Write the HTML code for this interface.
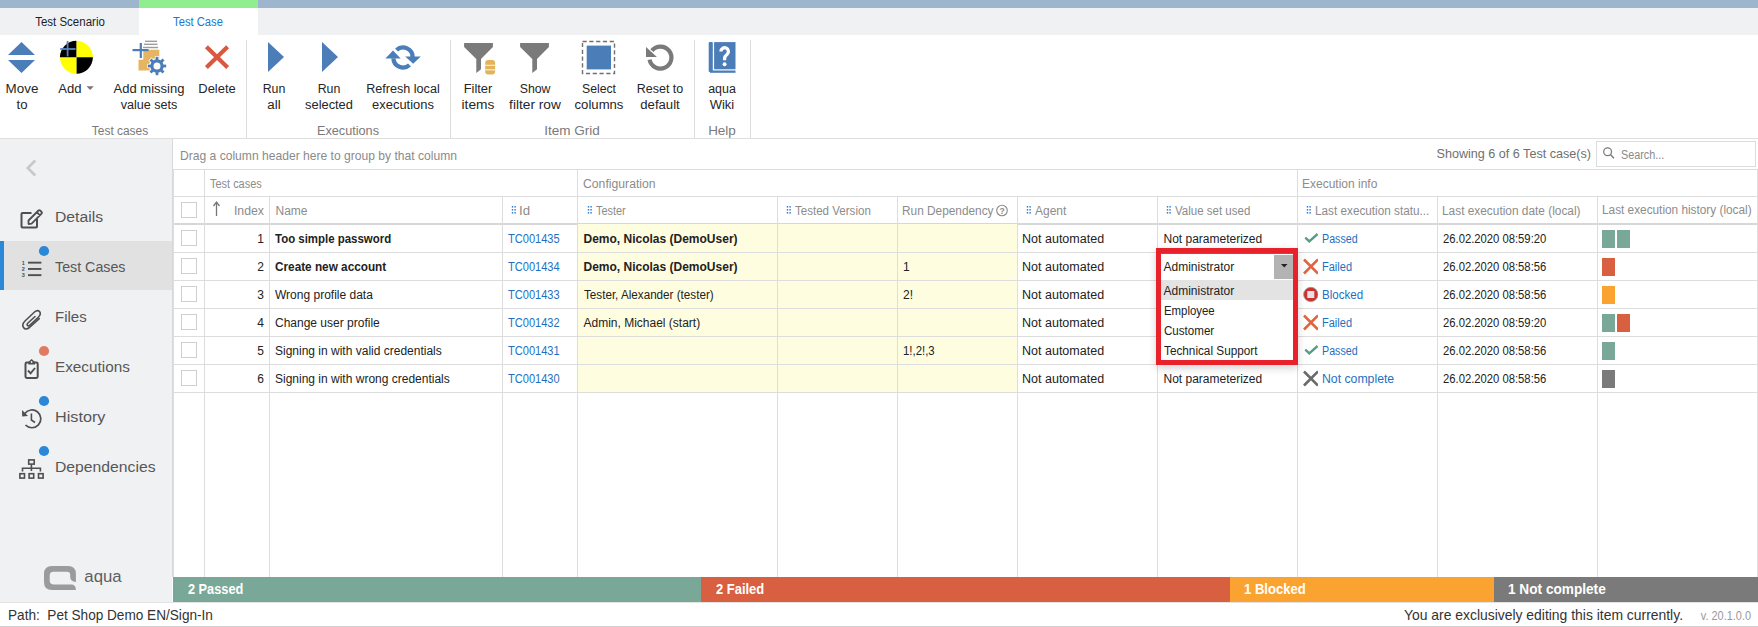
<!DOCTYPE html>
<html><head><meta charset="utf-8"><style>
html,body{margin:0;padding:0;width:1758px;height:627px;overflow:hidden;background:#fff;position:relative;font-family:"Liberation Sans", sans-serif;}
svg text{font-family:"Liberation Sans", sans-serif;}
</style></head><body>
<div style="position:absolute;left:0px;top:0px;width:1758px;height:8px;background:#9db6cd;"></div>
<div style="position:absolute;left:0px;top:8px;width:1758px;height:27px;background:#f0f1f3;"></div>
<div style="position:absolute;left:139px;top:0px;width:119px;height:8px;background:#90ee90;"></div>
<div style="position:absolute;left:139px;top:8px;width:119px;height:27px;background:#ffffff;"></div>
<div style="position:absolute;left:-130.5px;width:400px;text-align:center;top:16.42px;font-size:12.5px;line-height:12.5px;color:#1e1e1e;font-weight:400;white-space:pre;transform:scaleX(0.92);transform-origin:center top;">Test Scenario</div>
<div style="position:absolute;left:-1.6999999999999886px;width:400px;text-align:center;top:16.42px;font-size:12.5px;line-height:12.5px;color:#1a78d0;font-weight:400;white-space:pre;transform:scaleX(0.895);transform-origin:center top;">Test Case</div>
<div style="position:absolute;left:0px;top:35px;width:1758px;height:103px;background:#ffffff;"></div>
<div style="position:absolute;left:0px;top:138px;width:1758px;height:1px;background:#dedede;"></div>
<div style="position:absolute;left:246px;top:40px;width:1px;height:98px;background:#dcdcdc;"></div>
<div style="position:absolute;left:450px;top:40px;width:1px;height:98px;background:#dcdcdc;"></div>
<div style="position:absolute;left:694px;top:40px;width:1px;height:98px;background:#dcdcdc;"></div>
<div style="position:absolute;left:750px;top:40px;width:1px;height:98px;background:#dcdcdc;"></div>
<div style="position:absolute;left:-178.5px;width:400px;text-align:center;top:82.59px;font-size:12.3px;line-height:12.3px;color:#262626;font-weight:400;white-space:pre;transform:scaleX(1.09);transform-origin:center top;">Move</div>
<div style="position:absolute;left:-178.5px;width:400px;text-align:center;top:98.59px;font-size:12.3px;line-height:12.3px;color:#262626;font-weight:400;white-space:pre;transform:scaleX(1.07);transform-origin:center top;">to</div>
<div style="position:absolute;left:-130.3px;width:400px;text-align:center;top:82.59px;font-size:12.3px;line-height:12.3px;color:#262626;font-weight:400;white-space:pre;transform:scaleX(1.064);transform-origin:center top;">Add</div>
<div style="position:absolute;left:-50.69999999999999px;width:400px;text-align:center;top:82.59px;font-size:12.3px;line-height:12.3px;color:#262626;font-weight:400;white-space:pre;transform:scaleX(1.057);transform-origin:center top;">Add missing</div>
<div style="position:absolute;left:-50.69999999999999px;width:400px;text-align:center;top:98.59px;font-size:12.3px;line-height:12.3px;color:#262626;font-weight:400;white-space:pre;transform:scaleX(1.024);transform-origin:center top;">value sets</div>
<div style="position:absolute;left:16.900000000000006px;width:400px;text-align:center;top:82.59px;font-size:12.3px;line-height:12.3px;color:#262626;font-weight:400;white-space:pre;transform:scaleX(1.051);transform-origin:center top;">Delete</div>
<div style="position:absolute;left:74.39999999999998px;width:400px;text-align:center;top:82.59px;font-size:12.3px;line-height:12.3px;color:#262626;font-weight:400;white-space:pre;transform:scaleX(1.005);transform-origin:center top;">Run</div>
<div style="position:absolute;left:74.39999999999998px;width:400px;text-align:center;top:98.59px;font-size:12.3px;line-height:12.3px;color:#262626;font-weight:400;white-space:pre;transform:scaleX(1.083);transform-origin:center top;">all</div>
<div style="position:absolute;left:128.89999999999998px;width:400px;text-align:center;top:82.59px;font-size:12.3px;line-height:12.3px;color:#262626;font-weight:400;white-space:pre;transform:scaleX(1.005);transform-origin:center top;">Run</div>
<div style="position:absolute;left:128.89999999999998px;width:400px;text-align:center;top:98.59px;font-size:12.3px;line-height:12.3px;color:#262626;font-weight:400;white-space:pre;transform:scaleX(1.044);transform-origin:center top;">selected</div>
<div style="position:absolute;left:203.0px;width:400px;text-align:center;top:82.59px;font-size:12.3px;line-height:12.3px;color:#262626;font-weight:400;white-space:pre;transform:scaleX(1.023);transform-origin:center top;">Refresh local</div>
<div style="position:absolute;left:203.0px;width:400px;text-align:center;top:98.59px;font-size:12.3px;line-height:12.3px;color:#262626;font-weight:400;white-space:pre;transform:scaleX(1.052);transform-origin:center top;">executions</div>
<div style="position:absolute;left:278.3px;width:400px;text-align:center;top:82.59px;font-size:12.3px;line-height:12.3px;color:#262626;font-weight:400;white-space:pre;transform:scaleX(1.048);transform-origin:center top;">Filter</div>
<div style="position:absolute;left:278.3px;width:400px;text-align:center;top:98.59px;font-size:12.3px;line-height:12.3px;color:#262626;font-weight:400;white-space:pre;transform:scaleX(1.118);transform-origin:center top;">items</div>
<div style="position:absolute;left:335.1px;width:400px;text-align:center;top:82.59px;font-size:12.3px;line-height:12.3px;color:#262626;font-weight:400;white-space:pre;transform:scaleX(1.0);transform-origin:center top;">Show</div>
<div style="position:absolute;left:335.1px;width:400px;text-align:center;top:98.59px;font-size:12.3px;line-height:12.3px;color:#262626;font-weight:400;white-space:pre;transform:scaleX(1.115);transform-origin:center top;">filter row</div>
<div style="position:absolute;left:398.79999999999995px;width:400px;text-align:center;top:82.59px;font-size:12.3px;line-height:12.3px;color:#262626;font-weight:400;white-space:pre;transform:scaleX(0.994);transform-origin:center top;">Select</div>
<div style="position:absolute;left:398.79999999999995px;width:400px;text-align:center;top:98.59px;font-size:12.3px;line-height:12.3px;color:#262626;font-weight:400;white-space:pre;transform:scaleX(1.067);transform-origin:center top;">columns</div>
<div style="position:absolute;left:460.0px;width:400px;text-align:center;top:82.59px;font-size:12.3px;line-height:12.3px;color:#262626;font-weight:400;white-space:pre;transform:scaleX(1.018);transform-origin:center top;">Reset to</div>
<div style="position:absolute;left:460.0px;width:400px;text-align:center;top:98.59px;font-size:12.3px;line-height:12.3px;color:#262626;font-weight:400;white-space:pre;transform:scaleX(1.068);transform-origin:center top;">default</div>
<div style="position:absolute;left:522.0px;width:400px;text-align:center;top:82.59px;font-size:12.3px;line-height:12.3px;color:#262626;font-weight:400;white-space:pre;transform:scaleX(1.011);transform-origin:center top;">aqua</div>
<div style="position:absolute;left:522.0px;width:400px;text-align:center;top:98.59px;font-size:12.3px;line-height:12.3px;color:#262626;font-weight:400;white-space:pre;transform:scaleX(1.057);transform-origin:center top;">Wiki</div>
<div style="position:absolute;left:-80.0px;width:400px;text-align:center;top:124.59px;font-size:12.3px;line-height:12.3px;color:#7a7a7a;font-weight:400;white-space:pre;transform:scaleX(0.971);transform-origin:center top;">Test cases</div>
<div style="position:absolute;left:148.3px;width:400px;text-align:center;top:124.59px;font-size:12.3px;line-height:12.3px;color:#7a7a7a;font-weight:400;white-space:pre;transform:scaleX(1.031);transform-origin:center top;">Executions</div>
<div style="position:absolute;left:372.0px;width:400px;text-align:center;top:124.59px;font-size:12.3px;line-height:12.3px;color:#7a7a7a;font-weight:400;white-space:pre;transform:scaleX(1.1);transform-origin:center top;">Item Grid</div>
<div style="position:absolute;left:522.2px;width:400px;text-align:center;top:124.59px;font-size:12.3px;line-height:12.3px;color:#7a7a7a;font-weight:400;white-space:pre;transform:scaleX(1.096);transform-origin:center top;">Help</div>
<svg style="position:absolute;left:0px;top:35px" width="760" height="100" viewBox="0 35 760 100"><polygon points="8,55 21.5,42 35,55" fill="#4b7db8"/><polygon points="8,60 35,60 21.5,73" fill="#4b7db8"/><path d="M76.4,57.3 L76.4,40.8 A16.5,16.5 0 0 1 92.9,57.3 Z" fill="#ffff00"/><path d="M76.4,57.3 L92.9,57.3 A16.5,16.5 0 0 1 76.4,73.8 Z" fill="#000"/><path d="M76.4,57.3 L76.4,73.8 A16.5,16.5 0 0 1 59.900000000000006,57.3 Z" fill="#ffff00"/><path d="M76.4,57.3 L59.900000000000006,57.3 A16.5,16.5 0 0 1 76.4,40.8 Z" fill="#000"/><rect x="60.2" y="48.1" width="15.4" height="1.8" fill="#5585c0"/><rect x="66.7" y="41" width="1.8" height="15.4" fill="#5585c0"/><polygon points="86.5,86.2 93.8,86.2 90.15,90" fill="#777"/><rect x="145" y="40.6" width="12" height="1.4" fill="#9d9d9d"/><rect x="144" y="43.6" width="13.5" height="1.4" fill="#9d9d9d"/><rect x="143" y="46.8" width="15" height="1.4" fill="#9d9d9d"/><polygon points="143.3,49.8 159.3,49.8 159.3,70.5 138.5,70.5 138.5,59.7 143.3,59.7" fill="#e5b562"/><rect x="132.5" y="49" width="16" height="2.2" fill="#4b7db8"/><rect x="139.7" y="43" width="2.2" height="15" fill="#4b7db8"/><rect x="155.6" y="56.8" width="2.8" height="4" fill="#fff" stroke="#fff" stroke-width="1.4" transform="rotate(0 157 66)"/><rect x="155.6" y="56.8" width="2.8" height="4" fill="#fff" stroke="#fff" stroke-width="1.4" transform="rotate(45 157 66)"/><rect x="155.6" y="56.8" width="2.8" height="4" fill="#fff" stroke="#fff" stroke-width="1.4" transform="rotate(90 157 66)"/><rect x="155.6" y="56.8" width="2.8" height="4" fill="#fff" stroke="#fff" stroke-width="1.4" transform="rotate(135 157 66)"/><rect x="155.6" y="56.8" width="2.8" height="4" fill="#fff" stroke="#fff" stroke-width="1.4" transform="rotate(180 157 66)"/><rect x="155.6" y="56.8" width="2.8" height="4" fill="#fff" stroke="#fff" stroke-width="1.4" transform="rotate(225 157 66)"/><rect x="155.6" y="56.8" width="2.8" height="4" fill="#fff" stroke="#fff" stroke-width="1.4" transform="rotate(270 157 66)"/><rect x="155.6" y="56.8" width="2.8" height="4" fill="#fff" stroke="#fff" stroke-width="1.4" transform="rotate(315 157 66)"/><circle cx="157" cy="66" r="5.2" fill="none" stroke="#fff" stroke-width="5.6"/><rect x="155.6" y="56.8" width="2.8" height="4" fill="#4b7db8" transform="rotate(0 157 66)"/><rect x="155.6" y="56.8" width="2.8" height="4" fill="#4b7db8" transform="rotate(45 157 66)"/><rect x="155.6" y="56.8" width="2.8" height="4" fill="#4b7db8" transform="rotate(90 157 66)"/><rect x="155.6" y="56.8" width="2.8" height="4" fill="#4b7db8" transform="rotate(135 157 66)"/><rect x="155.6" y="56.8" width="2.8" height="4" fill="#4b7db8" transform="rotate(180 157 66)"/><rect x="155.6" y="56.8" width="2.8" height="4" fill="#4b7db8" transform="rotate(225 157 66)"/><rect x="155.6" y="56.8" width="2.8" height="4" fill="#4b7db8" transform="rotate(270 157 66)"/><rect x="155.6" y="56.8" width="2.8" height="4" fill="#4b7db8" transform="rotate(315 157 66)"/><circle cx="157" cy="66" r="5.1" fill="#fff" stroke="#4b7db8" stroke-width="3.2"/><path d="M206.4,46.8 L227.6,67.4 M227.6,46.8 L206.4,67.4" stroke="#d9583f" stroke-width="4.2" stroke-linecap="butt"/><polygon points="268,42 268,72 284,57" fill="#4b7db8"/><polygon points="322,42 322,72 338,57" fill="#4b7db8"/><path d="M396.5,50 A9.6,9.6 0 0 1 412.6,57.5" fill="none" stroke="#4b7db8" stroke-width="4.3"/><path d="M393.4,58.4 A9.6,9.6 0 0 0 409.5,65" fill="none" stroke="#4b7db8" stroke-width="4.3"/><polygon points="393,50.4 385.4,58.4 400.7,58.4" fill="#4b7db8"/><polygon points="405.2,56.5 420.8,56.5 413.2,63.8" fill="#4b7db8"/><polygon points="464.1,43.1 492.9,43.1 492.9,46.9 481,59 481,69.3 476.3,73.1 476.3,59 464.1,46.9" fill="#7a7a7a"/><rect x="485.2" y="60" width="9.9" height="14.4" rx="3" fill="#e2b35a"/><rect x="485.2" y="64.8" width="9.9" height="0.9" fill="#fff"/><rect x="485.2" y="69.4" width="9.9" height="0.9" fill="#fff"/><polygon points="520.1,43.1 548.9,43.1 548.9,46.9 537,59 537,69.3 532.3,73.1 532.3,59 520.1,46.9" fill="#7a7a7a"/><rect x="582.5" y="41.5" width="32" height="32" fill="none" stroke="#707070" stroke-width="1.4" stroke-dasharray="4.2,2.6"/><rect x="586.7" y="45.6" width="24.3" height="23.8" fill="#4b7db8"/><path d="M649.6,59.6 A11,11 0 1 0 651.9,50.6" fill="none" stroke="#7a7a7a" stroke-width="4.2"/><polygon points="646,46.9 646,57.1 656.9,57.1" fill="#7a7a7a"/><rect x="708.7" y="42.1" width="4.1" height="30" rx="1" fill="#4b7db8"/><rect x="714.1" y="42.1" width="21.4" height="27.2" fill="#4b7db8"/><rect x="710" y="70.5" width="25.5" height="2.3" fill="#4b7db8"/><path d="M720.9,51.6 A3.75,3.75 0 1 1 727.2,54.3 Q724.6,56.3 724.6,58.5 L724.6,60.2" fill="none" stroke="#fff" stroke-width="3.3"/><circle cx="724.6" cy="64.2" r="1.95" fill="#fff"/></svg>
<div style="position:absolute;left:0px;top:139px;width:172px;height:463px;background:#f0f1f3;"></div>
<div style="position:absolute;left:172px;top:139px;width:1px;height:438px;background:#d9d9d9;"></div>
<div style="position:absolute;left:0px;top:241px;width:172px;height:49px;background:#e1e1e1;"></div>
<div style="position:absolute;left:0px;top:241px;width:4px;height:49px;background:#2b87d8;"></div>
<div style="position:absolute;left:54.5px;top:208.88px;font-size:15.5px;line-height:15.5px;color:#575757;font-weight:400;white-space:pre;transform:scaleX(1.0132258064516129);transform-origin:left top;">Details</div>
<div style="position:absolute;left:54.5px;top:258.88px;font-size:15.5px;line-height:15.5px;color:#575757;font-weight:400;white-space:pre;transform:scaleX(0.9193548387096774);transform-origin:left top;">Test Cases</div>
<div style="position:absolute;left:54.5px;top:308.88px;font-size:15.5px;line-height:15.5px;color:#575757;font-weight:400;white-space:pre;transform:scaleX(0.967741935483871);transform-origin:left top;">Files</div>
<div style="position:absolute;left:54.5px;top:358.88px;font-size:15.5px;line-height:15.5px;color:#575757;font-weight:400;white-space:pre;transform:scaleX(0.9870967741935485);transform-origin:left top;">Executions</div>
<div style="position:absolute;left:54.5px;top:408.88px;font-size:15.5px;line-height:15.5px;color:#575757;font-weight:400;white-space:pre;transform:scaleX(1.0451612903225809);transform-origin:left top;">History</div>
<div style="position:absolute;left:54.5px;top:458.88px;font-size:15.5px;line-height:15.5px;color:#575757;font-weight:400;white-space:pre;transform:scaleX(1.0141935483870967);transform-origin:left top;">Dependencies</div>
<svg style="position:absolute;left:0px;top:139px" width="172" height="463" viewBox="0 139 172 463"><polyline points="35.3,160.5 27.8,168 35.3,175.5" fill="none" stroke="#c9c9c9" stroke-width="2.7"/><path d="M31.5,213 L22.5,213 Q21.5,213 21.5,214 L21.5,226.5 Q21.5,227.5 22.5,227.5 L36,227.5 Q37,227.5 37,226.5 L37,219" fill="none" stroke="#4f4f4f" stroke-width="2"/><path d="M28.5,224 L28.5,220.5 L38.5,210.5 Q39.3,209.7 40.1,210.5 L41.6,212 Q42.4,212.8 41.6,213.6 L31.6,223.6 Z M36.8,212.2 L40,215.4" fill="none" stroke="#4f4f4f" stroke-width="1.8" stroke-linejoin="round"/><rect x="28" y="261.7" width="13.4" height="1.9" fill="#4f4f4f"/><rect x="28" y="268" width="13.4" height="1.9" fill="#4f4f4f"/><rect x="28" y="274.2" width="13.4" height="1.9" fill="#4f4f4f"/><text x="23.3" y="265" font-family="Liberation Sans" font-size="5.5" font-weight="700" fill="#4f4f4f" text-anchor="middle">1</text><text x="23.3" y="271" font-family="Liberation Sans" font-size="5.5" font-weight="700" fill="#4f4f4f" text-anchor="middle">2</text><text x="23.3" y="277" font-family="Liberation Sans" font-size="5.5" font-weight="700" fill="#4f4f4f" text-anchor="middle">3</text><path d="M39.3,318.7 L29.5,327.5 Q25.5,330.5 23.5,327.5 Q21.5,324.5 25,321 L34.5,312 Q37.5,309.5 39.5,311.5 Q41.5,314 38.5,317 L30,325 Q28.5,326.5 27.5,325.5 Q26.5,324.5 28,323 L35,316.5" fill="none" stroke="#4f4f4f" stroke-width="1.6" stroke-linecap="round"/><rect x="25.5" y="362.6" width="12.2" height="15.3" rx="1.3" fill="none" stroke="#4f4f4f" stroke-width="2"/><polygon points="28.3,364.4 35,364.4 35,362 31.6,359 28.3,362" fill="#4f4f4f"/><circle cx="31.6" cy="362" r="0.9" fill="#f0f1f3"/><polyline points="28,370.5 30.6,373.3 35,368" fill="none" stroke="#4f4f4f" stroke-width="1.9"/><path d="M24.8,413.5 A8.9,8.9 0 1 1 25.5,425" fill="none" stroke="#4f4f4f" stroke-width="1.7"/><polygon points="22,410 22.2,416.5 28,416" fill="#4f4f4f"/><polyline points="31.4,413.5 31.4,420 35,422.5" fill="none" stroke="#4f4f4f" stroke-width="1.6"/><rect x="28.7" y="459.9" width="5.5" height="4.2" fill="none" stroke="#4f4f4f" stroke-width="1.6"/><path d="M31.4,464 L31.4,471 M22.5,471.5 L22.5,468.3 L40.4,468.3 L40.4,471.5" fill="none" stroke="#4f4f4f" stroke-width="1.6"/><rect x="19.9" y="473.7" width="4.6" height="4.4" fill="none" stroke="#4f4f4f" stroke-width="1.6"/><rect x="29.1" y="473.7" width="4.6" height="4.4" fill="none" stroke="#4f4f4f" stroke-width="1.6"/><rect x="38.5" y="473.7" width="4.6" height="4.4" fill="none" stroke="#4f4f4f" stroke-width="1.6"/><circle cx="44" cy="251" r="5.1" fill="#2b87d8"/><circle cx="44" cy="351" r="5.1" fill="#e07b62"/><circle cx="44" cy="401" r="5.1" fill="#2b87d8"/><circle cx="44" cy="451" r="5.1" fill="#2b87d8"/><path d="M75.9,582 L75.9,574 Q75.9,566 68,566 L52,566 Q44,566 44,574 L44,582 Q44,590 52,590 L75.9,590 Q75.9,585 72,584.5 L54,584.5 Q49.7,584.5 49.7,580.5 L49.7,575.5 Q49.7,571.7 53.5,571.7 L67,571.7 Q70.2,571.7 70.2,575 L70.2,577 Q70.2,581.5 75.9,582 Z" fill="#9b9b9b"/></svg>
<div style="position:absolute;left:84.3px;top:569.28px;font-size:16.8px;line-height:16.8px;color:#5e5e5e;font-weight:400;white-space:pre;">aqua</div>
<div style="position:absolute;left:180px;top:149.76px;font-size:12.1px;line-height:12.1px;color:#8a8a8a;font-weight:400;white-space:pre;">Drag a column header here to group by that column</div>
<div style="position:absolute;left:1291px;width:300px;text-align:right;top:148.33px;font-size:12.6px;line-height:12.6px;color:#707070;font-weight:400;white-space:pre;">Showing 6 of 6 Test case(s)</div>
<div style="position:absolute;left:1596px;top:141px;width:160px;height:26px;background:#fff;box-sizing:border-box;border:1px solid #dcdcdc;"></div>
<svg style="position:absolute;left:1600px;top:145px" width="20" height="18" viewBox="1600 145 20 18"><circle cx="1607.6" cy="151.7" r="3.9" fill="none" stroke="#7a7a7a" stroke-width="1.25"/><path d="M1610.4,154.5 L1614,158.3" stroke="#7a7a7a" stroke-width="1.4"/></svg>
<div style="position:absolute;left:1621px;top:148.84px;font-size:12px;line-height:12px;color:#8a8a8a;font-weight:400;white-space:pre;transform:scaleX(0.9);transform-origin:left top;">Search...</div>
<div style="position:absolute;left:173px;top:169px;width:1585px;height:1px;background:#dddddd;"></div>
<div style="position:absolute;left:173px;top:196px;width:1585px;height:1px;background:#dddddd;"></div>
<div style="position:absolute;left:173px;top:223px;width:1585px;height:2px;background:#d7d7d7;"></div>
<div style="position:absolute;left:578px;top:224px;width:439px;height:168px;background:#fffde0;"></div>
<div style="position:absolute;left:173px;top:252px;width:1585px;height:1px;background:#dddddd;"></div>
<div style="position:absolute;left:173px;top:280px;width:1585px;height:1px;background:#dddddd;"></div>
<div style="position:absolute;left:173px;top:308px;width:1585px;height:1px;background:#dddddd;"></div>
<div style="position:absolute;left:173px;top:336px;width:1585px;height:1px;background:#dddddd;"></div>
<div style="position:absolute;left:173px;top:364px;width:1585px;height:1px;background:#dddddd;"></div>
<div style="position:absolute;left:173px;top:392px;width:1585px;height:1px;background:#dddddd;"></div>
<div style="position:absolute;left:173px;top:169px;width:1px;height:408px;background:#dddddd;"></div>
<div style="position:absolute;left:204px;top:169px;width:1px;height:408px;background:#dddddd;"></div>
<div style="position:absolute;left:269px;top:197px;width:1px;height:380px;background:#dddddd;"></div>
<div style="position:absolute;left:502px;top:197px;width:1px;height:380px;background:#dddddd;"></div>
<div style="position:absolute;left:577px;top:169px;width:1px;height:408px;background:#dddddd;"></div>
<div style="position:absolute;left:777px;top:197px;width:1px;height:380px;background:#dddddd;"></div>
<div style="position:absolute;left:897px;top:197px;width:1px;height:380px;background:#dddddd;"></div>
<div style="position:absolute;left:1017px;top:197px;width:1px;height:380px;background:#dddddd;"></div>
<div style="position:absolute;left:1157px;top:197px;width:1px;height:380px;background:#dddddd;"></div>
<div style="position:absolute;left:1297px;top:169px;width:1px;height:408px;background:#dddddd;"></div>
<div style="position:absolute;left:1437px;top:197px;width:1px;height:380px;background:#dddddd;"></div>
<div style="position:absolute;left:1597px;top:197px;width:1px;height:380px;background:#dddddd;"></div>
<div style="position:absolute;left:1757px;top:169px;width:1px;height:408px;background:#dddddd;"></div>
<div style="position:absolute;left:210px;top:177.84px;font-size:12px;line-height:12px;color:#8c8c8c;font-weight:400;white-space:pre;transform:scaleX(0.913);transform-origin:left top;">Test cases</div>
<div style="position:absolute;left:583px;top:177.84px;font-size:12px;line-height:12px;color:#8c8c8c;font-weight:400;white-space:pre;transform:scaleX(1.017);transform-origin:left top;">Configuration</div>
<div style="position:absolute;left:1302px;top:177.84px;font-size:12px;line-height:12px;color:#8c8c8c;font-weight:400;white-space:pre;">Execution info</div>
<div style="position:absolute;left:181px;top:202px;width:16px;height:16px;background:#fff;box-sizing:border-box;border:1px solid #cfcfcf;"></div>
<div style="position:absolute;left:181px;top:230px;width:16px;height:16px;background:#fff;box-sizing:border-box;border:1px solid #cfcfcf;"></div>
<div style="position:absolute;left:181px;top:258px;width:16px;height:16px;background:#fff;box-sizing:border-box;border:1px solid #cfcfcf;"></div>
<div style="position:absolute;left:181px;top:286px;width:16px;height:16px;background:#fff;box-sizing:border-box;border:1px solid #cfcfcf;"></div>
<div style="position:absolute;left:181px;top:314px;width:16px;height:16px;background:#fff;box-sizing:border-box;border:1px solid #cfcfcf;"></div>
<div style="position:absolute;left:181px;top:342px;width:16px;height:16px;background:#fff;box-sizing:border-box;border:1px solid #cfcfcf;"></div>
<div style="position:absolute;left:181px;top:370px;width:16px;height:16px;background:#fff;box-sizing:border-box;border:1px solid #cfcfcf;"></div>
<svg style="position:absolute;left:173px;top:197px" width="1585" height="26" viewBox="173 197 1585 26"><path d="M216.5,202.5 L216.5,216" stroke="#777" stroke-width="1.3"/><path d="M213.5,206 L216.5,202 L219.5,206" fill="none" stroke="#777" stroke-width="1.3"/><rect x="511.8" y="206" width="1.4" height="1.6" fill="#3a7fd2"/><rect x="514.4" y="206" width="1.4" height="1.6" fill="#3a7fd2"/><rect x="511.8" y="209" width="1.4" height="1.6" fill="#3a7fd2"/><rect x="514.4" y="209" width="1.4" height="1.6" fill="#3a7fd2"/><rect x="511.8" y="212" width="1.4" height="1.6" fill="#3a7fd2"/><rect x="514.4" y="212" width="1.4" height="1.6" fill="#3a7fd2"/><rect x="587.8" y="206" width="1.4" height="1.6" fill="#3a7fd2"/><rect x="590.4" y="206" width="1.4" height="1.6" fill="#3a7fd2"/><rect x="587.8" y="209" width="1.4" height="1.6" fill="#3a7fd2"/><rect x="590.4" y="209" width="1.4" height="1.6" fill="#3a7fd2"/><rect x="587.8" y="212" width="1.4" height="1.6" fill="#3a7fd2"/><rect x="590.4" y="212" width="1.4" height="1.6" fill="#3a7fd2"/><rect x="786.8" y="206" width="1.4" height="1.6" fill="#3a7fd2"/><rect x="789.4" y="206" width="1.4" height="1.6" fill="#3a7fd2"/><rect x="786.8" y="209" width="1.4" height="1.6" fill="#3a7fd2"/><rect x="789.4" y="209" width="1.4" height="1.6" fill="#3a7fd2"/><rect x="786.8" y="212" width="1.4" height="1.6" fill="#3a7fd2"/><rect x="789.4" y="212" width="1.4" height="1.6" fill="#3a7fd2"/><rect x="1026.8" y="206" width="1.4" height="1.6" fill="#3a7fd2"/><rect x="1029.3999999999999" y="206" width="1.4" height="1.6" fill="#3a7fd2"/><rect x="1026.8" y="209" width="1.4" height="1.6" fill="#3a7fd2"/><rect x="1029.3999999999999" y="209" width="1.4" height="1.6" fill="#3a7fd2"/><rect x="1026.8" y="212" width="1.4" height="1.6" fill="#3a7fd2"/><rect x="1029.3999999999999" y="212" width="1.4" height="1.6" fill="#3a7fd2"/><rect x="1166.8" y="206" width="1.4" height="1.6" fill="#3a7fd2"/><rect x="1169.3999999999999" y="206" width="1.4" height="1.6" fill="#3a7fd2"/><rect x="1166.8" y="209" width="1.4" height="1.6" fill="#3a7fd2"/><rect x="1169.3999999999999" y="209" width="1.4" height="1.6" fill="#3a7fd2"/><rect x="1166.8" y="212" width="1.4" height="1.6" fill="#3a7fd2"/><rect x="1169.3999999999999" y="212" width="1.4" height="1.6" fill="#3a7fd2"/><rect x="1306.8" y="206" width="1.4" height="1.6" fill="#3a7fd2"/><rect x="1309.3999999999999" y="206" width="1.4" height="1.6" fill="#3a7fd2"/><rect x="1306.8" y="209" width="1.4" height="1.6" fill="#3a7fd2"/><rect x="1309.3999999999999" y="209" width="1.4" height="1.6" fill="#3a7fd2"/><rect x="1306.8" y="212" width="1.4" height="1.6" fill="#3a7fd2"/><rect x="1309.3999999999999" y="212" width="1.4" height="1.6" fill="#3a7fd2"/><circle cx="1002" cy="210.5" r="5.3" fill="none" stroke="#8c8c8c" stroke-width="1.1"/><text x="1002" y="214" font-family="Liberation Sans" font-size="8.5" font-weight="700" fill="#8c8c8c" text-anchor="middle">?</text></svg>
<div style="position:absolute;left:164px;width:100px;text-align:right;top:204.84px;font-size:12px;line-height:12px;color:#8c8c8c;font-weight:400;white-space:pre;transform:scaleX(1.025);transform-origin:right top;">Index</div>
<div style="position:absolute;left:275.5px;top:204.84px;font-size:12px;line-height:12px;color:#8c8c8c;font-weight:400;white-space:pre;">Name</div>
<div style="position:absolute;left:519.3px;top:204.84px;font-size:12px;line-height:12px;color:#8c8c8c;font-weight:400;white-space:pre;transform:scaleX(1.1);transform-origin:left top;">Id</div>
<div style="position:absolute;left:596px;top:204.84px;font-size:12px;line-height:12px;color:#8c8c8c;font-weight:400;white-space:pre;transform:scaleX(0.909);transform-origin:left top;">Tester</div>
<div style="position:absolute;left:795px;top:204.84px;font-size:12px;line-height:12px;color:#8c8c8c;font-weight:400;white-space:pre;transform:scaleX(0.963);transform-origin:left top;">Tested Version</div>
<div style="position:absolute;left:902px;top:204.84px;font-size:12px;line-height:12px;color:#8c8c8c;font-weight:400;white-space:pre;transform:scaleX(0.987);transform-origin:left top;">Run Dependency</div>
<div style="position:absolute;left:1035px;top:204.84px;font-size:12px;line-height:12px;color:#8c8c8c;font-weight:400;white-space:pre;">Agent</div>
<div style="position:absolute;left:1175px;top:204.84px;font-size:12px;line-height:12px;color:#8c8c8c;font-weight:400;white-space:pre;transform:scaleX(0.959);transform-origin:left top;">Value set used</div>
<div style="position:absolute;left:1315px;top:204.84px;font-size:12px;line-height:12px;color:#8c8c8c;font-weight:400;white-space:pre;transform:scaleX(0.979);transform-origin:left top;">Last execution statu...</div>
<div style="position:absolute;left:1442px;top:204.84px;font-size:12px;line-height:12px;color:#8c8c8c;font-weight:400;white-space:pre;transform:scaleX(0.989);transform-origin:left top;">Last execution date (local)</div>
<div style="position:absolute;left:1602px;top:203.84px;font-size:12px;line-height:12px;color:#8c8c8c;font-weight:400;white-space:pre;transform:scaleX(0.984);transform-origin:left top;">Last execution history (local)</div>
<div style="position:absolute;left:204px;width:60px;text-align:right;top:232.84px;font-size:12px;line-height:12px;color:#222;font-weight:400;white-space:pre;">1</div>
<div style="position:absolute;left:275px;top:232.84px;font-size:12px;line-height:12px;color:#222;font-weight:700;white-space:pre;transform:scaleX(0.954);transform-origin:left top;">Too simple password</div>
<div style="position:absolute;left:508px;top:232.84px;font-size:12px;line-height:12px;color:#1f6fbf;font-weight:400;white-space:pre;transform:scaleX(0.921);transform-origin:left top;">TC001435</div>
<div style="position:absolute;left:583.5px;top:232.84px;font-size:12px;line-height:12px;color:#222;font-weight:700;white-space:pre;">Demo, Nicolas (DemoUser)</div>
<div style="position:absolute;left:1022.3px;top:232.84px;font-size:12px;line-height:12px;color:#222;font-weight:400;white-space:pre;transform:scaleX(1.043);transform-origin:left top;">Not automated</div>
<div style="position:absolute;left:1163.5px;top:232.84px;font-size:12px;line-height:12px;color:#222;font-weight:400;white-space:pre;">Not parameterized</div>
<div style="position:absolute;left:1321.5px;top:232.84px;font-size:12px;line-height:12px;color:#1f6fbf;font-weight:400;white-space:pre;transform:scaleX(0.892);transform-origin:left top;">Passed</div>
<div style="position:absolute;left:1443px;top:232.84px;font-size:12px;line-height:12px;color:#222;font-weight:400;white-space:pre;transform:scaleX(0.938);transform-origin:left top;">26.02.2020 08:59:20</div>
<div style="position:absolute;left:1602px;top:230px;width:13px;height:18px;background:#7aa898;"></div>
<div style="position:absolute;left:1617px;top:230px;width:13px;height:18px;background:#7aa898;"></div>
<div style="position:absolute;left:204px;width:60px;text-align:right;top:260.84px;font-size:12px;line-height:12px;color:#222;font-weight:400;white-space:pre;">2</div>
<div style="position:absolute;left:275px;top:260.84px;font-size:12px;line-height:12px;color:#222;font-weight:700;white-space:pre;transform:scaleX(0.981);transform-origin:left top;">Create new account</div>
<div style="position:absolute;left:508px;top:260.84px;font-size:12px;line-height:12px;color:#1f6fbf;font-weight:400;white-space:pre;transform:scaleX(0.921);transform-origin:left top;">TC001434</div>
<div style="position:absolute;left:583.5px;top:260.84px;font-size:12px;line-height:12px;color:#222;font-weight:700;white-space:pre;">Demo, Nicolas (DemoUser)</div>
<div style="position:absolute;left:903px;top:260.84px;font-size:12px;line-height:12px;color:#222;font-weight:400;white-space:pre;">1</div>
<div style="position:absolute;left:1022.3px;top:260.84px;font-size:12px;line-height:12px;color:#222;font-weight:400;white-space:pre;transform:scaleX(1.043);transform-origin:left top;">Not automated</div>
<div style="position:absolute;left:1321.5px;top:260.84px;font-size:12px;line-height:12px;color:#1f6fbf;font-weight:400;white-space:pre;transform:scaleX(0.919);transform-origin:left top;">Failed</div>
<div style="position:absolute;left:1443px;top:260.84px;font-size:12px;line-height:12px;color:#222;font-weight:400;white-space:pre;transform:scaleX(0.938);transform-origin:left top;">26.02.2020 08:58:56</div>
<div style="position:absolute;left:1602px;top:258px;width:13px;height:18px;background:#d95f41;"></div>
<div style="position:absolute;left:204px;width:60px;text-align:right;top:288.84px;font-size:12px;line-height:12px;color:#222;font-weight:400;white-space:pre;">3</div>
<div style="position:absolute;left:275px;top:288.84px;font-size:12px;line-height:12px;color:#222;font-weight:400;white-space:pre;">Wrong profile data</div>
<div style="position:absolute;left:508px;top:288.84px;font-size:12px;line-height:12px;color:#1f6fbf;font-weight:400;white-space:pre;transform:scaleX(0.921);transform-origin:left top;">TC001433</div>
<div style="position:absolute;left:583.5px;top:288.84px;font-size:12px;line-height:12px;color:#222;font-weight:400;white-space:pre;transform:scaleX(0.972);transform-origin:left top;">Tester, Alexander (tester)</div>
<div style="position:absolute;left:903px;top:288.84px;font-size:12px;line-height:12px;color:#222;font-weight:400;white-space:pre;">2!</div>
<div style="position:absolute;left:1022.3px;top:288.84px;font-size:12px;line-height:12px;color:#222;font-weight:400;white-space:pre;transform:scaleX(1.043);transform-origin:left top;">Not automated</div>
<div style="position:absolute;left:1321.5px;top:288.84px;font-size:12px;line-height:12px;color:#1f6fbf;font-weight:400;white-space:pre;transform:scaleX(0.962);transform-origin:left top;">Blocked</div>
<div style="position:absolute;left:1443px;top:288.84px;font-size:12px;line-height:12px;color:#222;font-weight:400;white-space:pre;transform:scaleX(0.938);transform-origin:left top;">26.02.2020 08:58:56</div>
<div style="position:absolute;left:1602px;top:286px;width:13px;height:18px;background:#fba330;"></div>
<div style="position:absolute;left:204px;width:60px;text-align:right;top:316.84px;font-size:12px;line-height:12px;color:#222;font-weight:400;white-space:pre;">4</div>
<div style="position:absolute;left:275px;top:316.84px;font-size:12px;line-height:12px;color:#222;font-weight:400;white-space:pre;">Change user profile</div>
<div style="position:absolute;left:508px;top:316.84px;font-size:12px;line-height:12px;color:#1f6fbf;font-weight:400;white-space:pre;transform:scaleX(0.921);transform-origin:left top;">TC001432</div>
<div style="position:absolute;left:583.5px;top:316.84px;font-size:12px;line-height:12px;color:#222;font-weight:400;white-space:pre;">Admin, Michael (start)</div>
<div style="position:absolute;left:1022.3px;top:316.84px;font-size:12px;line-height:12px;color:#222;font-weight:400;white-space:pre;transform:scaleX(1.043);transform-origin:left top;">Not automated</div>
<div style="position:absolute;left:1321.5px;top:316.84px;font-size:12px;line-height:12px;color:#1f6fbf;font-weight:400;white-space:pre;transform:scaleX(0.919);transform-origin:left top;">Failed</div>
<div style="position:absolute;left:1443px;top:316.84px;font-size:12px;line-height:12px;color:#222;font-weight:400;white-space:pre;transform:scaleX(0.938);transform-origin:left top;">26.02.2020 08:59:20</div>
<div style="position:absolute;left:1602px;top:314px;width:13px;height:18px;background:#7aa898;"></div>
<div style="position:absolute;left:1617px;top:314px;width:13px;height:18px;background:#d95f41;"></div>
<div style="position:absolute;left:204px;width:60px;text-align:right;top:344.84px;font-size:12px;line-height:12px;color:#222;font-weight:400;white-space:pre;">5</div>
<div style="position:absolute;left:275px;top:344.84px;font-size:12px;line-height:12px;color:#222;font-weight:400;white-space:pre;">Signing in with valid credentials</div>
<div style="position:absolute;left:508px;top:344.84px;font-size:12px;line-height:12px;color:#1f6fbf;font-weight:400;white-space:pre;transform:scaleX(0.921);transform-origin:left top;">TC001431</div>
<div style="position:absolute;left:583.5px;top:344.84px;font-size:12px;line-height:12px;color:#222;font-weight:400;white-space:pre;"></div>
<div style="position:absolute;left:903px;top:344.84px;font-size:12px;line-height:12px;color:#222;font-weight:400;white-space:pre;transform:scaleX(0.948);transform-origin:left top;">1!,2!,3</div>
<div style="position:absolute;left:1022.3px;top:344.84px;font-size:12px;line-height:12px;color:#222;font-weight:400;white-space:pre;transform:scaleX(1.043);transform-origin:left top;">Not automated</div>
<div style="position:absolute;left:1321.5px;top:344.84px;font-size:12px;line-height:12px;color:#1f6fbf;font-weight:400;white-space:pre;transform:scaleX(0.892);transform-origin:left top;">Passed</div>
<div style="position:absolute;left:1443px;top:344.84px;font-size:12px;line-height:12px;color:#222;font-weight:400;white-space:pre;transform:scaleX(0.938);transform-origin:left top;">26.02.2020 08:58:56</div>
<div style="position:absolute;left:1602px;top:342px;width:13px;height:18px;background:#7aa898;"></div>
<div style="position:absolute;left:204px;width:60px;text-align:right;top:372.84px;font-size:12px;line-height:12px;color:#222;font-weight:400;white-space:pre;">6</div>
<div style="position:absolute;left:275px;top:372.84px;font-size:12px;line-height:12px;color:#222;font-weight:400;white-space:pre;">Signing in with wrong credentials</div>
<div style="position:absolute;left:508px;top:372.84px;font-size:12px;line-height:12px;color:#1f6fbf;font-weight:400;white-space:pre;transform:scaleX(0.921);transform-origin:left top;">TC001430</div>
<div style="position:absolute;left:583.5px;top:372.84px;font-size:12px;line-height:12px;color:#222;font-weight:400;white-space:pre;"></div>
<div style="position:absolute;left:1022.3px;top:372.84px;font-size:12px;line-height:12px;color:#222;font-weight:400;white-space:pre;transform:scaleX(1.043);transform-origin:left top;">Not automated</div>
<div style="position:absolute;left:1163.5px;top:372.84px;font-size:12px;line-height:12px;color:#222;font-weight:400;white-space:pre;">Not parameterized</div>
<div style="position:absolute;left:1321.5px;top:372.84px;font-size:12px;line-height:12px;color:#1f6fbf;font-weight:400;white-space:pre;transform:scaleX(1.021);transform-origin:left top;">Not complete</div>
<div style="position:absolute;left:1443px;top:372.84px;font-size:12px;line-height:12px;color:#222;font-weight:400;white-space:pre;transform:scaleX(0.938);transform-origin:left top;">26.02.2020 08:58:56</div>
<div style="position:absolute;left:1602px;top:370px;width:13px;height:18px;background:#7a7a7a;"></div>
<svg style="position:absolute;left:1298px;top:224px" width="20" height="168" viewBox="1298 224 20 168"><polyline points="1305.3,237.7 1309.3,241.3 1317.6,234" fill="none" stroke="#5b9a86" stroke-width="2.4"/><path d="M1304,259.5 L1318,273.5 M1318,259.5 L1304,273.5" stroke="#e0653f" stroke-width="2.6"/><circle cx="1310.8" cy="294.5" r="7.2" fill="#d22f2f" stroke="#9a9a9a" stroke-width="0.8"/><rect x="1307.3" y="291" width="7" height="7" fill="#e3e3e3"/><path d="M1304,315.5 L1318,329.5 M1318,315.5 L1304,329.5" stroke="#e0653f" stroke-width="2.6"/><polyline points="1305.3,349.7 1309.3,353.3 1317.6,346" fill="none" stroke="#5b9a86" stroke-width="2.4"/><path d="M1304,371.5 L1318,385.5 M1318,371.5 L1304,385.5" stroke="#6a6a6a" stroke-width="2.6"/></svg>
<div style="position:absolute;left:1156px;top:248px;width:142px;height:117px;background:#e8212b;box-shadow:0 3px 8px rgba(0,0,0,0.18);"></div>
<div style="position:absolute;left:1161px;top:253px;width:132px;height:107px;background:#ffffff;"></div>
<div style="position:absolute;left:1161px;top:253px;width:132px;height:1px;background:#2a7ad0;"></div>
<div style="position:absolute;left:1274px;top:254.5px;width:19px;height:24px;background:#b3b3b3;"></div>
<svg style="position:absolute;left:1279px;top:263px" width="10" height="6" viewBox="1279 263 10 6"><polygon points="1281,264 1287.5,264 1284.25,267.5" fill="#222"/></svg>
<div style="position:absolute;left:1163.5px;top:260.84px;font-size:12px;line-height:12px;color:#222;font-weight:400;white-space:pre;">Administrator</div>
<div style="position:absolute;left:1161px;top:280px;width:132px;height:20px;background:#e3e3e3;"></div>
<div style="position:absolute;left:1163.5px;top:284.84px;font-size:12px;line-height:12px;color:#222;font-weight:400;white-space:pre;">Administrator</div>
<div style="position:absolute;left:1163.5px;top:304.84px;font-size:12px;line-height:12px;color:#222;font-weight:400;white-space:pre;transform:scaleX(0.95);transform-origin:left top;">Employee</div>
<div style="position:absolute;left:1163.5px;top:324.84px;font-size:12px;line-height:12px;color:#222;font-weight:400;white-space:pre;transform:scaleX(0.965);transform-origin:left top;">Customer</div>
<div style="position:absolute;left:1163.5px;top:344.84px;font-size:12px;line-height:12px;color:#222;font-weight:400;white-space:pre;transform:scaleX(0.98);transform-origin:left top;">Technical Support</div>
<div style="position:absolute;left:173px;top:577px;width:528px;height:25px;background:#7aa898;"></div>
<div style="position:absolute;left:701px;top:577px;width:529px;height:25px;background:#d95f41;"></div>
<div style="position:absolute;left:1230px;top:577px;width:264px;height:25px;background:#fba330;"></div>
<div style="position:absolute;left:1494px;top:577px;width:264px;height:25px;background:#7a7a7a;"></div>
<div style="position:absolute;left:187.6px;top:582.15px;font-size:14px;line-height:14px;color:#fff;font-weight:700;white-space:pre;transform:scaleX(0.91);transform-origin:left top;">2 Passed</div>
<div style="position:absolute;left:716px;top:582.15px;font-size:14px;line-height:14px;color:#fff;font-weight:700;white-space:pre;transform:scaleX(0.924);transform-origin:left top;">2 Failed</div>
<div style="position:absolute;left:1244px;top:582.15px;font-size:14px;line-height:14px;color:#fff;font-weight:700;white-space:pre;transform:scaleX(0.933);transform-origin:left top;">1 Blocked</div>
<div style="position:absolute;left:1508px;top:582.15px;font-size:14px;line-height:14px;color:#fff;font-weight:700;white-space:pre;transform:scaleX(0.974);transform-origin:left top;">1 Not complete</div>
<div style="position:absolute;left:0px;top:602px;width:1758px;height:1px;background:#e3e3e3;"></div>
<div style="position:absolute;left:0px;top:626px;width:1758px;height:1px;background:#d0d0d0;"></div>
<div style="position:absolute;left:7.5px;top:608.23px;font-size:14.5px;line-height:14.5px;color:#333;font-weight:400;white-space:pre;transform:scaleX(0.938);transform-origin:left top;">Path:  Pet Shop Demo EN/Sign-In</div>
<div style="position:absolute;left:1283px;width:400px;text-align:right;top:608.23px;font-size:14.5px;line-height:14.5px;color:#333;font-weight:400;white-space:pre;transform:scaleX(0.959);transform-origin:right top;">You are exclusively editing this item currently.</div>
<div style="position:absolute;left:1651px;width:100px;text-align:right;top:609.84px;font-size:12px;line-height:12px;color:#999;font-weight:400;white-space:pre;transform:scaleX(0.91);transform-origin:right top;">v. 20.1.0.0</div>
</body></html>
